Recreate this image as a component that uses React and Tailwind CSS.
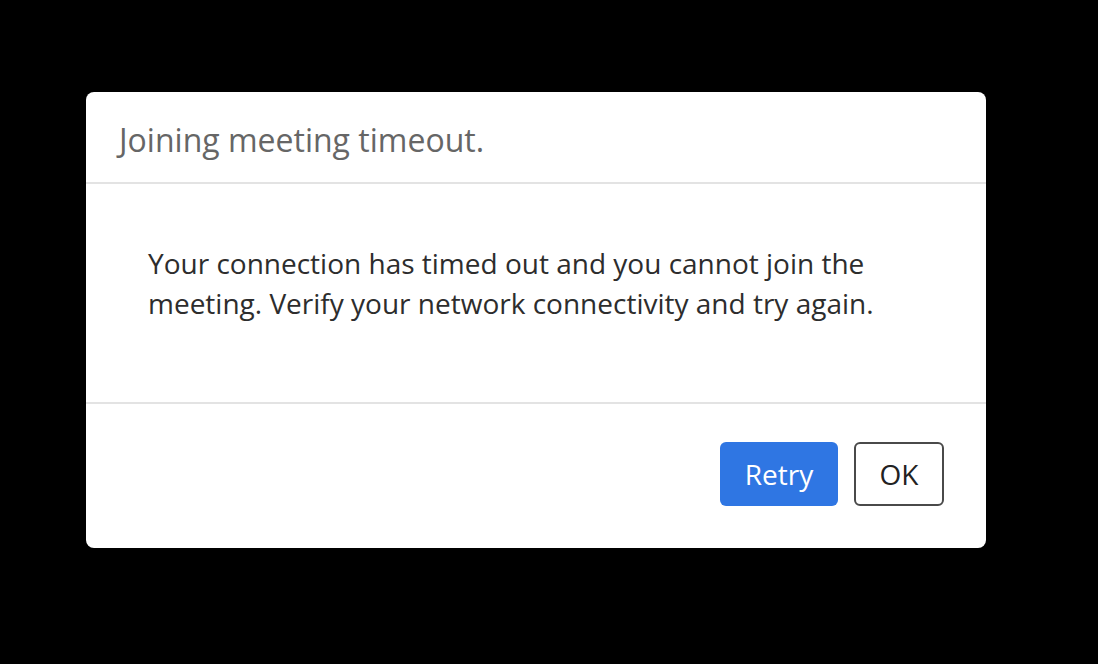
export default function App() {
  return (
    <div
      className="w-[1098px] h-[664px] bg-black pt-[92px] pl-[86px]"
      style={{ fontFamily: '"Open Sans", "Noto Sans", sans-serif' }}
    >
      <div className="w-[900px] h-[456px] bg-white rounded-[8px] flex flex-col">
        {/* Header */}
        <div className="h-[92px] border-b-2 border-[#e3e3e3] pl-[33px] pt-[32px]">
          <h1 className="text-[32px] text-[#666666] leading-none">Joining meeting timeout.</h1>
        </div>

        {/* Body */}
        <div className="h-[220px] border-b-2 border-[#e3e3e3] pl-[62px] pr-[30px] pt-[59px]">
          <p className="text-[28px] leading-[40px] text-[#2d2d2d]">
            Your connection has timed out and you cannot join the
            <br />
            meeting. Verify your network connectivity and try again.
          </p>
        </div>

        {/* Footer */}
        <div className="flex-1 flex items-start justify-end gap-[16px] pt-[38px] pr-[42px]">
          <button className="w-[118px] h-[64px] rounded-[6px] bg-[#2f76e3] text-white text-[28px]">
            Retry
          </button>
          <button className="w-[90px] h-[64px] rounded-[6px] border-2 border-[#4a4a4a] bg-white text-[#222222] text-[28px]">
            OK
          </button>
        </div>
      </div>
    </div>
  );
}
